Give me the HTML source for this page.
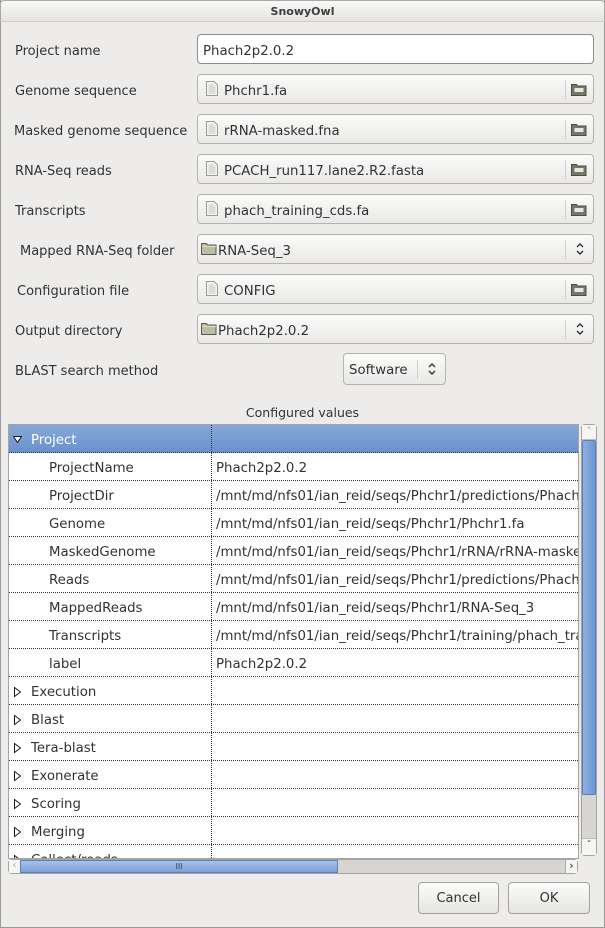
<!DOCTYPE html>
<html><head><meta charset="utf-8"><style>
*{box-sizing:border-box;margin:0;padding:0}
body{width:605px;height:928px;background:#edeceb;font-family:"DejaVu Sans","Liberation Sans",sans-serif;font-size:13px;color:#2e3436;position:relative;overflow:hidden}
.win{position:absolute;left:0;top:0;width:605px;height:928px;border:1px solid #9a9a98;border-top:none}
.title{position:absolute;left:0;top:0;width:605px;height:22px;background:linear-gradient(#f8f8f7,#e6e5e3);border:1px solid #a9a9a7;border-bottom:1px solid #cfceca;border-radius:4px 4px 0 0;text-align:center;font-weight:bold;font-size:11px;line-height:21px;color:#3c3c3c}
.lbl{position:absolute;left:15px;line-height:16px}
.fld{position:absolute;left:197px;width:397px;height:30px;border:1px solid #b5b3ae;border-radius:4px;line-height:33px;padding-left:8px;font-size:13.3px}
.entry{background:#fff;border-color:#8f8d88}
.btnf{background:linear-gradient(#fbfbfa,#e9e8e6)}
.fld .sep{position:absolute;right:27px;top:5px;width:1px;height:19px;background:#cfcdc9}
.fi{display:inline-block;vertical-align:middle;margin-right:6px;margin-top:-6px}
.ud{position:absolute;right:8px;top:6px}
.tree{position:absolute;left:8px;top:424px;width:571px;height:435px;border:1px solid #a6a4a0;background:#fff;overflow:hidden;font-size:13.3px}
.row{position:absolute;left:0;width:569px;height:28px;border-bottom:1px dotted #333;line-height:31px}
.row .c1{position:absolute;left:0;width:203px;height:27px;border-right:1px dotted #333}
.row .c2{position:absolute;left:207px;white-space:nowrap}
.sel{background:linear-gradient(#86a8d8,#6b92cd);color:#fff}
.btn{position:absolute;top:882px;height:32px;border:1px solid #a3a19c;border-radius:4px;background:linear-gradient(#fbfbfa,#e6e5e2);text-align:center;line-height:32px}
</style></head><body>
<div class="win"></div>
<div class="title">SnowyOwl</div>

<div class="lbl" style="top:44px">Project name</div>
<div class="lbl" style="top:84px">Genome sequence</div>
<div class="lbl" style="top:124px;left:14px">Masked genome sequence</div>
<div class="lbl" style="top:164px">RNA-Seq reads</div>
<div class="lbl" style="top:204px">Transcripts</div>
<div class="lbl" style="top:244px;left:20px">Mapped RNA-Seq folder</div>
<div class="lbl" style="top:284px;left:17px">Configuration file</div>
<div class="lbl" style="top:324px">Output directory</div>
<div class="lbl" style="top:364px">BLAST search method</div>

<div class="fld entry" style="top:34px;padding-left:5px">Phach2p2.0.2</div>

<svg width="0" height="0" style="position:absolute"><defs>
<symbol id="doc" viewBox="0 0 12 15"><path d="M0.5 0.5h7.5l3.5 3.5v10.5h-11z" fill="#f4f4f2" stroke="#9a9a96"/><path d="M2.5 4h5M2.5 6h7M2.5 8h7M2.5 10h7M2.5 12h7" stroke="#c4c4c0"/></symbol>
<symbol id="fold" viewBox="0 0 16 13"><path d="M0.5 1.5h5l1 1.5h8.5v9.5h-14.5z" fill="#bdbca6" stroke="#5c5c4e"/><path d="M1 4.5h14" stroke="#dcdccb"/></symbol>
<symbol id="ofold" viewBox="0 0 16 13"><path d="M0.5 1.5h5l1 1.5h8.5v9.5h-14.5z" fill="#75786a" stroke="#4b4d43"/><rect x="3.5" y="5" width="9" height="4" fill="#e8e8e2"/></symbol>
<symbol id="ud" viewBox="0 0 10 16"><path d="M2 6l3-3 3 3M2 10l3 3 3-3" fill="none" stroke="#2e3436" stroke-width="1.4"/></symbol>
</defs></svg>

<div class="fld btnf" style="top:74px"><svg class="fi" width="12" height="15"><use href="#doc"/></svg>Phchr1.fa<span class="sep"></span><svg style="position:absolute;right:6px;top:8px" width="16" height="13"><use href="#ofold"/></svg></div>
<div class="fld btnf" style="top:114px"><svg class="fi" width="12" height="15"><use href="#doc"/></svg>rRNA-masked.fna<span class="sep"></span><svg style="position:absolute;right:6px;top:8px" width="16" height="13"><use href="#ofold"/></svg></div>
<div class="fld btnf" style="top:154px"><svg class="fi" width="12" height="15"><use href="#doc"/></svg>PCACH_run117.lane2.R2.fasta<span class="sep"></span><svg style="position:absolute;right:6px;top:8px" width="16" height="13"><use href="#ofold"/></svg></div>
<div class="fld btnf" style="top:194px"><svg class="fi" width="12" height="15"><use href="#doc"/></svg>phach_training_cds.fa<span class="sep"></span><svg style="position:absolute;right:6px;top:8px" width="16" height="13"><use href="#ofold"/></svg></div>
<div class="fld btnf" style="top:234px;padding-left:3px"><svg class="fi" width="16" height="13" style="margin-right:1px"><use href="#fold"/></svg>RNA-Seq_3<span class="sep"></span><svg class="ud" width="10" height="16"><use href="#ud"/></svg></div>
<div class="fld btnf" style="top:274px"><svg class="fi" width="12" height="15"><use href="#doc"/></svg>CONFIG<span class="sep"></span><svg style="position:absolute;right:6px;top:8px" width="16" height="13"><use href="#ofold"/></svg></div>
<div class="fld btnf" style="top:314px;padding-left:3px"><svg class="fi" width="16" height="13" style="margin-right:1px"><use href="#fold"/></svg>Phach2p2.0.2<span class="sep"></span><svg class="ud" width="10" height="16"><use href="#ud"/></svg></div>
<div class="fld btnf" style="top:353px;left:343px;width:103px;height:32px;padding-left:5px;line-height:34px">Software<span class="sep" style="top:6px"></span><svg class="ud" width="10" height="16" style="top:7px"><use href="#ud"/></svg></div>

<div style="position:absolute;top:405px;left:0;width:605px;text-align:center;font-size:12.5px">Configured values</div>

<div class="tree">
<div class="row sel" style="top:0"><div class="c1" style="padding-left:22px"><svg style="position:absolute;left:4px;top:11px" width="9" height="7"><path d="M0.5 0.5h8l-4 6z" fill="#fff" stroke="#1a1a1a"/></svg>Project</div></div>
<div class="row" style="top:28px"><div class="c1" style="padding-left:40px">ProjectName</div><div class="c2">Phach2p2.0.2</div></div>
<div class="row" style="top:56px"><div class="c1" style="padding-left:40px">ProjectDir</div><div class="c2">/mnt/md/nfs01/ian_reid/seqs/Phchr1/predictions/Phach2p2.0.2</div></div>
<div class="row" style="top:84px"><div class="c1" style="padding-left:40px">Genome</div><div class="c2">/mnt/md/nfs01/ian_reid/seqs/Phchr1/Phchr1.fa</div></div>
<div class="row" style="top:112px"><div class="c1" style="padding-left:40px">MaskedGenome</div><div class="c2">/mnt/md/nfs01/ian_reid/seqs/Phchr1/rRNA/rRNA-masked.fna</div></div>
<div class="row" style="top:140px"><div class="c1" style="padding-left:40px">Reads</div><div class="c2">/mnt/md/nfs01/ian_reid/seqs/Phchr1/predictions/Phach2p2.0.2</div></div>
<div class="row" style="top:168px"><div class="c1" style="padding-left:40px">MappedReads</div><div class="c2">/mnt/md/nfs01/ian_reid/seqs/Phchr1/RNA-Seq_3</div></div>
<div class="row" style="top:196px"><div class="c1" style="padding-left:40px">Transcripts</div><div class="c2">/mnt/md/nfs01/ian_reid/seqs/Phchr1/training/phach_training_cds.fa</div></div>
<div class="row" style="top:224px"><div class="c1" style="padding-left:40px">label</div><div class="c2">Phach2p2.0.2</div></div>
<div class="row" style="top:252px"><div class="c1" style="padding-left:22px"><svg style="position:absolute;left:5px;top:10px" width="7" height="10"><path d="M0.5 0.5l6 4.5-6 4.5z" fill="#fff" stroke="#1a1a1a"/></svg>Execution</div></div>
<div class="row" style="top:280px"><div class="c1" style="padding-left:22px"><svg style="position:absolute;left:5px;top:10px" width="7" height="10"><path d="M0.5 0.5l6 4.5-6 4.5z" fill="#fff" stroke="#1a1a1a"/></svg>Blast</div></div>
<div class="row" style="top:308px"><div class="c1" style="padding-left:22px"><svg style="position:absolute;left:5px;top:10px" width="7" height="10"><path d="M0.5 0.5l6 4.5-6 4.5z" fill="#fff" stroke="#1a1a1a"/></svg>Tera-blast</div></div>
<div class="row" style="top:336px"><div class="c1" style="padding-left:22px"><svg style="position:absolute;left:5px;top:10px" width="7" height="10"><path d="M0.5 0.5l6 4.5-6 4.5z" fill="#fff" stroke="#1a1a1a"/></svg>Exonerate</div></div>
<div class="row" style="top:364px"><div class="c1" style="padding-left:22px"><svg style="position:absolute;left:5px;top:10px" width="7" height="10"><path d="M0.5 0.5l6 4.5-6 4.5z" fill="#fff" stroke="#1a1a1a"/></svg>Scoring</div></div>
<div class="row" style="top:392px"><div class="c1" style="padding-left:22px"><svg style="position:absolute;left:5px;top:10px" width="7" height="10"><path d="M0.5 0.5l6 4.5-6 4.5z" fill="#fff" stroke="#1a1a1a"/></svg>Merging</div></div>
<div class="row" style="top:420px"><div class="c1" style="padding-left:22px"><svg style="position:absolute;left:5px;top:10px" width="7" height="10"><path d="M0.5 0.5l6 4.5-6 4.5z" fill="#fff" stroke="#1a1a1a"/></svg>Collect/reads</div></div>
</div>

<div style="position:absolute;left:581px;top:424px;width:16px;height:432px;border:1px solid #a6a4a0;border-radius:4px;background:#d6d5d2"></div>
<div style="position:absolute;left:582px;top:440px;width:14px;height:355px;background:linear-gradient(90deg,#8eb0e0,#6e95d0);border:1px solid #5a7fb8;border-radius:2px"></div>
<div style="position:absolute;left:582px;top:425px;width:14px;height:15px;background:#f5f5f4;border-bottom:1px solid #bbb;font-size:9px;text-align:center;color:#888;line-height:15px">&#710;</div>
<div style="position:absolute;left:582px;top:838px;width:14px;height:17px;background:#f5f5f4;border-top:1px solid #bbb;font-size:10px;text-align:center;color:#333;line-height:14px">&#711;</div>

<div style="position:absolute;left:8px;top:859px;width:570px;height:15px;border:1px solid #a6a4a0;border-radius:4px;background:#d6d5d2"></div>
<div style="position:absolute;left:20px;top:860px;width:318px;height:13px;background:linear-gradient(#a8c2e8,#7da0d8);border:1px solid #5a7fb8;text-align:center;font-size:8px;line-height:11px;color:#345">III</div>
<div style="position:absolute;left:9px;top:860px;width:11px;height:13px;background:#f5f5f4;font-size:10px;color:#aaa;line-height:12px;text-align:center">&#8249;</div>
<div style="position:absolute;left:565px;top:860px;width:12px;height:13px;background:#f5f5f4;border-left:1px solid #aaa;font-size:11px;color:#222;line-height:12px;text-align:center">&#8250;</div>

<div class="btn" style="left:418px;width:81px">Cancel</div>
<div class="btn" style="left:508px;width:82px">OK</div>
</body></html>
